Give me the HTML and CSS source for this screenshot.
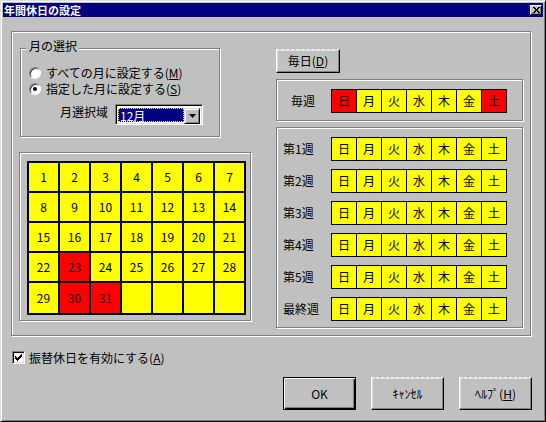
FILE: index.html
```html
<!DOCTYPE html>
<html lang="ja">
<head>
<meta charset="utf-8">
<title>年間休日の設定</title>
<link rel="stylesheet" href="styles.css">
</head>
<body>
<div class="window">
  <div class="titlebar">
    <span class="title">年間休日の設定</span>
    <span class="close"><svg width="7" height="6" viewBox="0 0 7 6"><path d="M0 0h2v1h-2zM5 0h2v1h-2zM1 1h2v1h-2zM4 1h2v1h-2zM2 2h3v1h-3zM2 3h3v1h-3zM1 4h2v1h-2zM4 4h2v1h-2zM0 5h2v1h-2zM5 5h2v1h-2z" fill="#000"/></svg></span>
  </div>
  <div class="main">
    <div class="group outer">
      <div class="left">
        <div class="group month">
          <span class="legend">月の選択</span>
          <div class="radio-row"><span class="radio"></span><span>すべての月に設定する(<u>M</u>)</span></div>
          <div class="radio-row"><span class="radio checked"></span><span>指定した月に設定する(<u>S</u>)</span></div>
          <div class="combo-row">
            <span class="combo-label">月選択域</span>
            <div class="combo">
              <span class="combo-value">12月</span>
              <span class="combo-btn"><svg width="7" height="4" viewBox="0 0 7 4"><path d="M0 0h7l-3.5 4z" fill="#000"/></svg></span>
            </div>
          </div>
        </div>
        <div class="group cal">
          <div class="cal-grid">
            <span>1</span><span>2</span><span>3</span><span>4</span><span>5</span><span>6</span><span>7</span>
            <span>8</span><span>9</span><span>10</span><span>11</span><span>12</span><span>13</span><span>14</span>
            <span>15</span><span>16</span><span>17</span><span>18</span><span>19</span><span>20</span><span>21</span>
            <span>22</span><span class="red">23</span><span>24</span><span>25</span><span>26</span><span>27</span><span>28</span>
            <span>29</span><span class="red">30</span><span class="red">31</span><span></span><span></span><span></span><span></span>
          </div>
        </div>
      </div>
      <div class="right">
        <button class="btn daily dashed">毎日(<u>D</u>)</button>
        <div class="group weekly">
          <div class="week-row">
            <span class="wk-label every">毎週</span>
            <div class="days"><span class="red">日</span><span>月</span><span>火</span><span>水</span><span>木</span><span>金</span><span class="red">土</span></div>
          </div>
        </div>
        <div class="group weeks">
          <div class="week-row"><span class="wk-label">第1週</span><div class="days"><span>日</span><span>月</span><span>火</span><span>水</span><span>木</span><span>金</span><span>土</span></div></div>
          <div class="week-row"><span class="wk-label">第2週</span><div class="days"><span>日</span><span>月</span><span>火</span><span>水</span><span>木</span><span>金</span><span>土</span></div></div>
          <div class="week-row"><span class="wk-label">第3週</span><div class="days"><span>日</span><span>月</span><span>火</span><span>水</span><span>木</span><span>金</span><span>土</span></div></div>
          <div class="week-row"><span class="wk-label">第4週</span><div class="days"><span>日</span><span>月</span><span>火</span><span>水</span><span>木</span><span>金</span><span>土</span></div></div>
          <div class="week-row"><span class="wk-label">第5週</span><div class="days"><span>日</span><span>月</span><span>火</span><span>水</span><span>木</span><span>金</span><span>土</span></div></div>
          <div class="week-row"><span class="wk-label">最終週</span><div class="days"><span>日</span><span>月</span><span>火</span><span>水</span><span>木</span><span>金</span><span>土</span></div></div>
        </div>
      </div>
    </div>
    <div class="check-row">
      <span class="checkbox"><svg width="7" height="7" viewBox="0 0 7 7"><path d="M6 0h1v3h-1v1h-1v1h-1v1h-1v1h-1v-1h-1v-1h-1v-3h1v1h1v1h1v-1h1v-1h1z" fill="#000"/></svg></span>
      <span>振替休日を有効にする(<u>A</u>)</span>
    </div>
    <div class="buttons">
      <button class="btn default">OK</button>
      <button class="btn dashed">ｷｬﾝｾﾙ</button>
      <button class="btn dashed">ﾍﾙﾌﾟ(<u>H</u>)</button>
    </div>
  </div>
</div>
</body>
</html>
```

FILE: styles.css
```css
* { box-sizing: border-box; }

body {
  margin: 0;
  background: #c0c0c0;
  font-family: "Noto Sans CJK JP", "Noto Sans", sans-serif;
  font-size: 12px;
  line-height: 14px;
  color: #000;
}

.window {
  width: 546px;
  height: 422px;
  border: 1px solid;
  border-color: #dfdfdf #000 #000 #dfdfdf;
  box-shadow: inset 1px 1px #fff, inset -1px -1px #808080;
  padding: 2px;
  display: flex;
  flex-direction: column;
  background: #c0c0c0;
}

.titlebar {
  height: 14px;
  flex: none;
  background: #000080;
  color: #fff;
  display: flex;
  align-items: center;
  justify-content: space-between;
  padding: 0 1px;
}

.title {
  font-weight: bold;
  font-size: 11px;
  line-height: 14px;
}

.close {
  width: 12px;
  height: 10px;
  background: #c0c0c0;
  border: 1px solid;
  border-color: #fff #000 #000 #fff;
  box-shadow: inset -1px -1px #808080;
  display: flex;
  align-items: center;
  justify-content: center;
}

.close svg { display: block; }

.main {
  flex: 1;
  padding: 14px 12px 0 8px;
  display: flex;
  flex-direction: column;
}

.group {
  position: relative;
  border: 1px solid #808080;
  box-shadow: 1px 1px 0 #fff, inset 1px 1px 0 #fff;
}

.outer {
  height: 305px;
  display: grid;
  grid-template-columns: 232px 247px;
  column-gap: 25px;
  padding: 16px 7px 0 7px;
  align-items: start;
}

.left {
  display: flex;
  flex-direction: column;
}

.month {
  margin-left: 1px;
  width: 200px;
  height: 89px;
  padding: 16px 0 0 8px;
}

.legend {
  position: absolute;
  left: 5px;
  top: -10px;
  padding: 0 2px 0 3px;
  background: #c0c0c0;
}

.radio-row {
  display: flex;
  align-items: center;
  gap: 5px;
  height: 16px;
  white-space: nowrap;
}

.radio {
  position: relative;
  width: 12px;
  height: 12px;
  flex: none;
  border-radius: 50%;
  background: #fff;
  border: 1px solid;
  border-color: #808080 #fff #fff #808080;
  box-shadow: inset 1px 1px #404040;
}

.radio.checked::after {
  content: "";
  position: absolute;
  left: 3px;
  top: 3px;
  width: 4px;
  height: 4px;
  border-radius: 50%;
  background: #000;
}

.combo-row {
  display: flex;
  align-items: flex-start;
  margin-top: 7px;
  margin-left: 31px;
}

.combo-label {
  width: 55px;
  padding-top: 1px;
}

.combo {
  width: 88px;
  height: 21px;
  display: flex;
  padding: 2px;
  background: #fff;
  border: 1px solid;
  border-color: #808080 #fff #fff #808080;
  box-shadow: inset 1px 1px #000, inset -1px -1px #dfdfdf;
}

.combo-value {
  flex: 1;
  margin-top: 1px;
  background: #000080;
  color: #fff;
  border: 1px dotted #ffff00;
  padding-left: 1px;
  line-height: 13px;
}

.combo-btn {
  width: 16px;
  height: 16px;
  margin-top: 1px;
  flex: none;
  display: flex;
  align-items: center;
  justify-content: center;
  background: #c0c0c0;
  border: 1px solid;
  border-color: #dfdfdf #000 #000 #dfdfdf;
  box-shadow: inset 1px 1px #fff, inset -1px -1px #808080;
}

.cal {
  margin-top: 15px;
  width: 232px;
  height: 169px;
  padding: 8px 0 0 7px;
}

.cal-grid {
  display: grid;
  grid-template-columns: repeat(7, 29px);
  grid-template-rows: repeat(4, 28px) 30px;
  gap: 2px;
  padding: 2px;
  width: max-content;
  background: #000;
}

.cal-grid span,
.days span {
  background: #ffff00;
  display: flex;
  align-items: center;
  justify-content: center;
}

.cal-grid span.red,
.days span.red {
  background: #ff0000;
}

.right {
  display: flex;
  flex-direction: column;
  align-items: flex-start;
  padding-top: 1px;
}

.btn {
  font: inherit;
  color: #000;
  background: #c0c0c0;
  padding: 0;
  border: 1px solid;
  border-color: #fff #000 #000 #fff;
  box-shadow: inset -1px -1px #808080, inset 1px 1px #dfdfdf;
  display: flex;
  align-items: center;
  justify-content: center;
}

.btn.dashed { border-top-style: dashed; }

.btn.default {
  border-color: #000;
  box-shadow: inset 1px 1px #fff, inset -1px -1px #000, inset -2px -2px #808080;
}

.daily {
  width: 64px;
  height: 24px;
}

.weekly {
  width: 247px;
  height: 42px;
  margin-top: 6px;
  padding: 9px 0 0 14px;
}

.weeks {
  width: 247px;
  height: 201px;
  margin-top: 6px;
  padding: 9px 0 0 6px;
  display: flex;
  flex-direction: column;
  gap: 8px;
}

.week-row {
  display: flex;
  align-items: center;
  height: 24px;
}

.wk-label {
  width: 48px;
  white-space: nowrap;
}

.wk-label.every { width: 40px; }

.days {
  display: grid;
  grid-template-columns: repeat(7, 24px);
  grid-template-rows: 22px;
  gap: 1px;
  padding: 1px;
  background: #000;
}

.check-row {
  display: flex;
  align-items: center;
  gap: 4px;
  height: 13px;
  margin-top: 15px;
  margin-left: 1px;
}

.checkbox {
  width: 13px;
  height: 13px;
  flex: none;
  display: flex;
  align-items: center;
  justify-content: center;
  background: #fff;
  border: 1px solid;
  border-color: #808080 #fff #fff #808080;
  box-shadow: inset 1px 1px #000, inset -1px -1px #dfdfdf;
}

.checkbox svg { display: block; }

.buttons {
  display: flex;
  justify-content: flex-end;
  gap: 15px;
  margin-top: 13px;
  margin-right: -1px;
}

.buttons .btn {
  width: 73px;
  height: 33px;
}
```
